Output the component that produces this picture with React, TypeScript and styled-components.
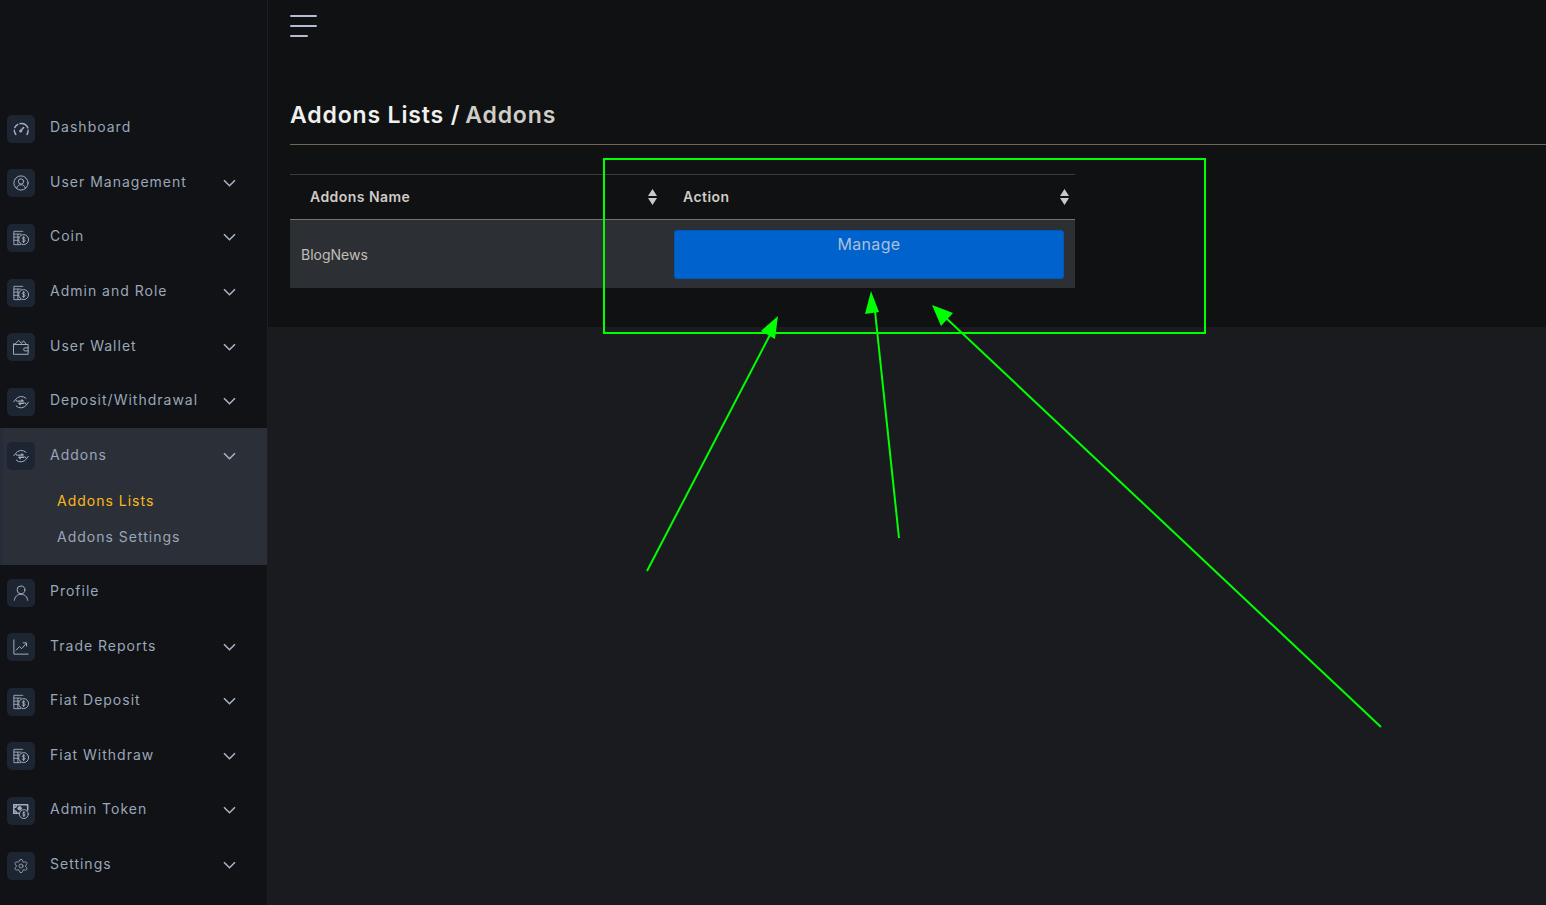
import React from "react";
import styled, { createGlobalStyle } from "styled-components";
import { Settings } from "lucide-react";

const Global = createGlobalStyle`
  html, body { margin: 0; padding: 0; height: 100%; background: #191b1e; overflow: hidden; }
  * { box-sizing: border-box; }
  #root { height: 100%; }
`;
const FONT = `"Inter", "Liberation Sans", sans-serif`;
const TILE = "#1e2532";

const Page = styled.div`
  position: relative; display: flex; width: 1546px; height: 905px; font-family: ${FONT}; overflow: hidden;
`;
const Sidebar = styled.aside`
  width: 268px; height: 100%; flex: none; background: #101215; border-right: 1px solid #1b1e22; padding-top: 100px;
`;
const MenuGroup = styled.div`
  background: #2b2f38; border-left: 3px solid #252c3a; height: 137px; margin-bottom: -0.8px;
`;
const Item = styled.div<{ $open?: boolean }>`
  display: flex; align-items: center; height: 54.6px; padding-left: ${p => (p.$open ? "4px" : "7px")}; padding-right: 31px;
`;
const IconTile = styled.span`
  flex: none; width: 28px; height: 28px; border-radius: 5px; background: ${TILE}; display: flex; align-items: center; justify-content: center;
  color: #a3aec0; margin-top: 3px;
`;
const Label = styled.span`
  flex: 1; margin-left: 15px; font-size: 14px; letter-spacing: 1px; color: #9aa6b9; white-space: nowrap; margin-top: -1px;
`;
const Chevron = styled.svg`
  flex: none; width: 13px; height: 8px; color: #a9b4c6; margin-top: 2px;
`;
const SubList = styled.div`
  padding: 0 0 0 54px;
`;
const SubItem = styled.div<{ $active?: boolean }>`
  height: 36px; display: flex; align-items: center; font-size: 14px; letter-spacing: 1px; color: ${p => (p.$active ? "#fbb918" : "#9aa6b9")};
`;
const Main = styled.main`
  flex: 1; min-width: 0; height: 100%; background: #191b1e;
`;
const Top = styled.section`
  height: 327px; background: #0f1113; padding: 15px 0 0 22px;
`;
const Burger = styled.div`
  width: 27px; height: 22px; display: flex; flex-direction: column; justify-content: space-between;
`;
const Bar = styled.span<{ $short?: boolean }>`
  display: block; height: 2px; width: ${p => (p.$short ? "18px" : "27px")}; background: #b3bbd6; border-radius: 1px;
`;
const Title = styled.h1`
  margin: 63px 0 0; height: 44px; font-size: 23px; line-height: 30px; font-weight: 600; letter-spacing: 0.85px; color: #f0f0ee; white-space: nowrap;
`;
const TitleSub = styled.span`
  color: #d0cdc6; margin-left: 5px;
`;
const Rule = styled.hr`
  margin: 0; border: 0; height: 1px; background: #6f6558;
`;
const Table = styled.table`
  margin-top: 29px; width: 785px; border-collapse: collapse; table-layout: fixed;
`;
const HeadRow = styled.tr`
  height: 45px; border-top: 1px solid #3a3a3a; border-bottom: 1px solid #77736c;
`;
const Th = styled.th<{ $w: number; $pl: number }>`
  position: relative; width: ${p => p.$w}px; padding: 0 0 2px ${p => p.$pl}px; text-align: left; font-size: 14px; font-weight: 600; letter-spacing: 0.45px; color: #cfcbc5;
`;
const Sort = styled.svg`
  position: absolute; right: 5.5px; top: 14px; width: 11px; height: 16px; color: #c9c9c9;
`;
const Row = styled.tr`
  height: 68px; background: #2c3034;
`;
const NameCell = styled.td`
  padding: 2px 0 0 11px; font-size: 14px; color: #c2beb6;
`;
const ActionCell = styled.td`
  padding: 0 11px 0 0; vertical-align: middle;
`;
const ManageBtn = styled.button`
  display: block; width: 390px; height: 49px; margin: 1px 0 0 11px; padding: 4px 0 0; background: #0062cc; border: 1px solid #0058b8; border-radius: 3px;
  font-family: ${FONT}; font-size: 16px; line-height: 18px; letter-spacing: 0.3px; color: #a9c0dc; text-align: center;
`;
const Manage = styled.span` display: block; height: 100%; `;
const Overlay = styled.svg`
  position: absolute; left: 0; top: 0; width: 1546px; height: 905px; pointer-events: none;
`;

const S = { fill: "none", stroke: "currentColor", strokeWidth: 1.1, strokeLinecap: "round" as const, strokeLinejoin: "round" as const };
const Ic = ({ children, size = 16 }: { children: React.ReactNode; size?: number }) => (
  <svg width={size} height={size} viewBox="0 0 18 18" {...S}>{children}</svg>
);
const Gauge = () => <Ic>
  <path d="M3.2 15.2A8 8 0 0 1 1.4 10.5M2 7.5a8 8 0 0 1 3.4-3.6M7.8 3c3.8-.6 7.4 1.2 9 4.8M17 10.3c.1 1.8-.3 3.4-1.3 4.9" strokeWidth="1.6" />
  <path d="M8.3 11.6l3.6-4.2" strokeWidth="1.8" /><circle cx="8.6" cy="11.3" r="1.2" />
</Ic>;
const UserCircle = () => <Ic>
  <circle cx="9" cy="9" r="8" /><circle cx="9" cy="7.3" r="3" /><path d="M4 14.9c.9-2.8 2.6-4 5-4s4.1 1.2 5 4" />
</Ic>;
const Coin = () => <Ic>
  <path d="M11 1.5H1v15h7.5M1 4.6h8M1 8h5.5M1 11.6h5.5M5.5 4.6V16.5" strokeWidth="1" />
  <circle cx="12" cy="10.8" r="5.6" fill={TILE} /><path d="M13.6 8.9c-.6-.8-3-.9-3.1.5-.1 1.7 3.3.9 3.1 2.7-.1 1.3-2.6 1.3-3.3.4M12 7.3v7" />
</Ic>;
const Wallet = () => <Ic>
  <path d="M1 6.2h16v11H1zM1 6.2V5M2 6l4.5-4.4L9.5 5l2.3-3 3.4 4.2" /><path d="M17 10h-3.4a1.7 1.7 0 0 0 0 3.4H17" />
</Ic>;
const Exchange = () => <Ic>
  <path d="M3 6A7.4 7.4 0 0 1 14.5 4.8M15.2 12.2A7.4 7.4 0 0 1 3.6 13.6" />
  <path d="M.8 8.8L3 6.2l1.6 2.4M17.2 9.4l-2 2.6-1.8-2.3" />
  <path d="M5.8 8h5.6l-1.5-1.4M12.2 10.4H6.6l1.5 1.4" strokeWidth="1.5" />
</Ic>;
const Person = () => <Ic>
  <circle cx="9" cy="5.5" r="4.4" /><path d="M1.5 17.2c.5-4.2 3.3-6.7 7.5-6.7s7 2.5 7.5 6.7" />
</Ic>;
const Chart = () => <Ic>
  <path d="M1 1v16h16" /><path d="M3.5 12.5l3.8-4 2.4 2.4 5.3-6M11.5 4.3h3.8V8" />
</Ic>;
const Token = () => <Ic>
  <path d="M16.5 8V2H.8v9.5h6" strokeWidth="1.8" /><circle cx="7.5" cy="6" r="2" fill="currentColor" /><path d="M1.2 5a2.8 2.8 0 0 0 2.8-2.6M1.2 8.6a2.8 2.8 0 0 1 2.8 2.6" strokeWidth="1.5" />
  <circle cx="12.2" cy="12.5" r="5" fill={TILE} /><path d="M13.6 11c-.4-.7-2.6-.7-2.7.4-.1 1.4 2.8.8 2.7 2.2-.1 1.1-2.3 1.1-2.8.3M12.2 9.6v5.8" strokeWidth="1" />
</Ic>;
const Gear = () => <Settings size={16} strokeWidth={1.2} />;

type Entry = { label: string; icon: React.ReactNode; caret?: boolean };
const before: Entry[] = [
  { label: "Dashboard", icon: <Gauge /> },
  { label: "User Management", icon: <UserCircle />, caret: true },
  { label: "Coin", icon: <Coin />, caret: true },
  { label: "Admin and Role", icon: <Coin />, caret: true },
  { label: "User Wallet", icon: <Wallet />, caret: true },
  { label: "Deposit/Withdrawal", icon: <Exchange />, caret: true },
];
const after: Entry[] = [
  { label: "Profile", icon: <Person /> },
  { label: "Trade Reports", icon: <Chart />, caret: true },
  { label: "Fiat Deposit", icon: <Coin />, caret: true },
  { label: "Fiat Withdraw", icon: <Coin />, caret: true },
  { label: "Admin Token", icon: <Token />, caret: true },
  { label: "Settings", icon: <Gear />, caret: true },
];
const Caret = () => (
  <Chevron viewBox="0 0 13 8"><path d="M1 1.2l5.5 5.5L12 1.2" fill="none" stroke="currentColor" strokeWidth="1.6" /></Chevron>
);
const MenuRow = ({ e, open }: { e: Entry; open?: boolean }) => (
  <Item $open={open}>
    <IconTile>{e.icon}</IconTile>
    <Label>{e.label}</Label>
    {e.caret && <Caret />}
  </Item>
);
const SortIcon = () => (
  <Sort viewBox="0 0 11 16"><path d="M5.5 0l4.5 7H1zM5.5 16l4.5-7H1z" fill="currentColor" /></Sort>
);

export default function App() {
  const G = "#00ff00";
  return (
    <Page>
      <Global />
      <Sidebar>
        {before.map(e => <MenuRow key={e.label} e={e} />)}
        <MenuGroup>
          <MenuRow open e={{ label: "Addons", icon: <Exchange />, caret: true }} />
          <SubList>
            <SubItem $active>Addons Lists</SubItem>
            <SubItem>Addons Settings</SubItem>
          </SubList>
        </MenuGroup>
        {after.map(e => <MenuRow key={e.label} e={e} />)}
      </Sidebar>
      <Main>
        <Top>
          <Burger><Bar /><Bar /><Bar $short /></Burger>
          <Title>Addons Lists /<TitleSub>Addons</TitleSub></Title>
          <Rule />
          <Table>
            <thead>
              <HeadRow>
                <Th $w={373} $pl={20}>Addons Name<SortIcon /></Th>
                <Th $w={412} $pl={20}>Action<SortIcon /></Th>
              </HeadRow>
            </thead>
            <tbody>
              <Row>
                <NameCell>BlogNews</NameCell>
                <ActionCell><ManageBtn><Manage>Manage</Manage></ManageBtn></ActionCell>
              </Row>
            </tbody>
          </Table>
        </Top>
      </Main>
      <Overlay viewBox="0 0 1546 905">
        <rect x="604" y="159" width="601" height="174" fill="none" stroke={G} strokeWidth="2" />
        <path d="M647 571L772 331" stroke={G} strokeWidth="2" fill="none" />
        <path d="M778 316L761 331L775 339Z" fill={G} />
        <path d="M899 538L875 311" stroke={G} strokeWidth="2" fill="none" />
        <path d="M871 291L865 314L879 312Z" fill={G} />
        <path d="M1381 727L946 318" stroke={G} strokeWidth="2" fill="none" />
        <path d="M932 305L941 326L953 313Z" fill={G} />
      </Overlay>
    </Page>
  );
}
